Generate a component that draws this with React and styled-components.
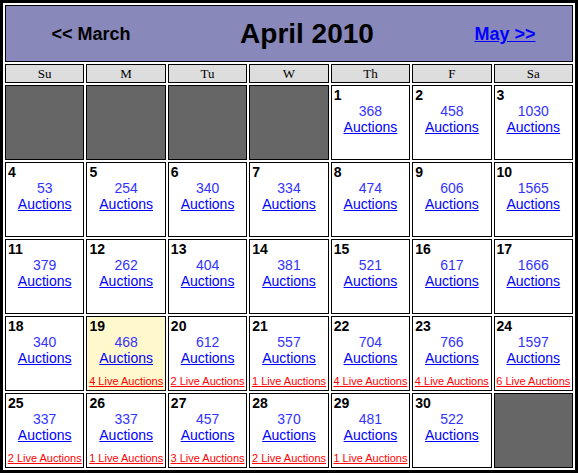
import React from 'react';
import styled, { createGlobalStyle } from 'styled-components';

const GlobalStyle = createGlobalStyle`
  body {
    margin: 0;
    background: #ffffff;
    font-family: 'Liberation Sans', Arial, sans-serif;
  }
`;

const weeks = [
  [null, null, null, null, { d: 1, n: 368 }, { d: 2, n: 458 }, { d: 3, n: 1030 }],
  [{ d: 4, n: 53 }, { d: 5, n: 254 }, { d: 6, n: 340 }, { d: 7, n: 334 }, { d: 8, n: 474 }, { d: 9, n: 606 }, { d: 10, n: 1565 }],
  [{ d: 11, n: 379 }, { d: 12, n: 262 }, { d: 13, n: 404 }, { d: 14, n: 381 }, { d: 15, n: 521 }, { d: 16, n: 617 }, { d: 17, n: 1666 }],
  [
    { d: 18, n: 340 },
    { d: 19, n: 468, live: 4, today: true },
    { d: 20, n: 612, live: 2 },
    { d: 21, n: 557, live: 1 },
    { d: 22, n: 704, live: 4 },
    { d: 23, n: 766, live: 4 },
    { d: 24, n: 1597, live: 6 },
  ],
  [
    { d: 25, n: 337, live: 2 },
    { d: 26, n: 337, live: 1 },
    { d: 27, n: 457, live: 3 },
    { d: 28, n: 370, live: 2 },
    { d: 29, n: 481, live: 1 },
    { d: 30, n: 522 },
    null,
  ],
];

const dayNames = ['Su', 'M', 'Tu', 'W', 'Th', 'F', 'Sa'];

export default function App() {
  return (
    <>
      <GlobalStyle />
      <Calendar>
        <Header>
          <PrevMonth>&lt;&lt; March</PrevMonth>
          <MonthTitle>April 2010</MonthTitle>
          <NextMonth href="#">May &gt;&gt;</NextMonth>
        </Header>
        {dayNames.map(name => (
          <DayName key={name}>{name}</DayName>
        ))}
        {weeks.flat().map((day, i) =>
          day ? (
            <DayCell key={i} $today={day.today}>
              <DayNumber>{day.d}</DayNumber>
              <Count>{day.n}</Count>
              <AuctionsLink href="#">Auctions</AuctionsLink>
              {day.live ? <LiveLink href="#">{day.live} Live Auctions</LiveLink> : null}
            </DayCell>
          ) : (
            <EmptyCell key={i} />
          )
        )}
      </Calendar>
    </>
  );
}

const Calendar = styled.div`
  box-sizing: border-box;
  width: 578px;
  border: 3px solid #000;
  padding: 2px;
  display: grid;
  grid-template-columns: repeat(7, 1fr);
  grid-template-rows: 57px 19px repeat(5, 75px);
  gap: 2px;
  background: #fff;
`;

const Header = styled.div`
  grid-column: 1 / -1;
  border: 1px solid #000;
  background: #8888bb;
  display: grid;
  grid-template-columns: 170px 1fr 134px;
  align-items: center;
  text-align: center;
  font-weight: bold;
`;

const PrevMonth = styled.div`
  font-size: 18px;
  color: #000;
  padding-top: 2px;
`;

const MonthTitle = styled.div`
  font-size: 28px;
  color: #000;
`;

const NextMonth = styled.a`
  font-size: 18px;
  color: #0000ff;
  text-decoration: underline;
  padding-top: 2px;
`;

const DayName = styled.div`
  border: 1px solid #000;
  background: #dddddd;
  font-family: 'Liberation Serif', 'Times New Roman', serif;
  font-size: 13px;
  display: flex;
  align-items: center;
  justify-content: center;
`;

const DayCell = styled.div`
  box-sizing: border-box;
  border: 1px solid #000;
  background: ${p => (p.$today ? '#fff8cc' : '#ffffff')};
  padding: 1px 2px 2px;
  display: flex;
  flex-direction: column;
  align-items: center;
  line-height: 16px;
  font-size: 14px;
  min-width: 0;
`;

const EmptyCell = styled.div`
  border: 1px solid #000;
  background: #666666;
`;

const DayNumber = styled.div`
  align-self: flex-start;
  font-weight: bold;
  color: #000;
`;

const Count = styled.div`
  color: #3333ff;
`;

const AuctionsLink = styled.a`
  color: #0000ff;
  text-decoration: underline;
`;

const LiveLink = styled.a`
  margin-top: auto;
  font-size: 11px;
  line-height: 13px;
  color: #ff0000;
  text-decoration: underline;
  white-space: nowrap;
`;
